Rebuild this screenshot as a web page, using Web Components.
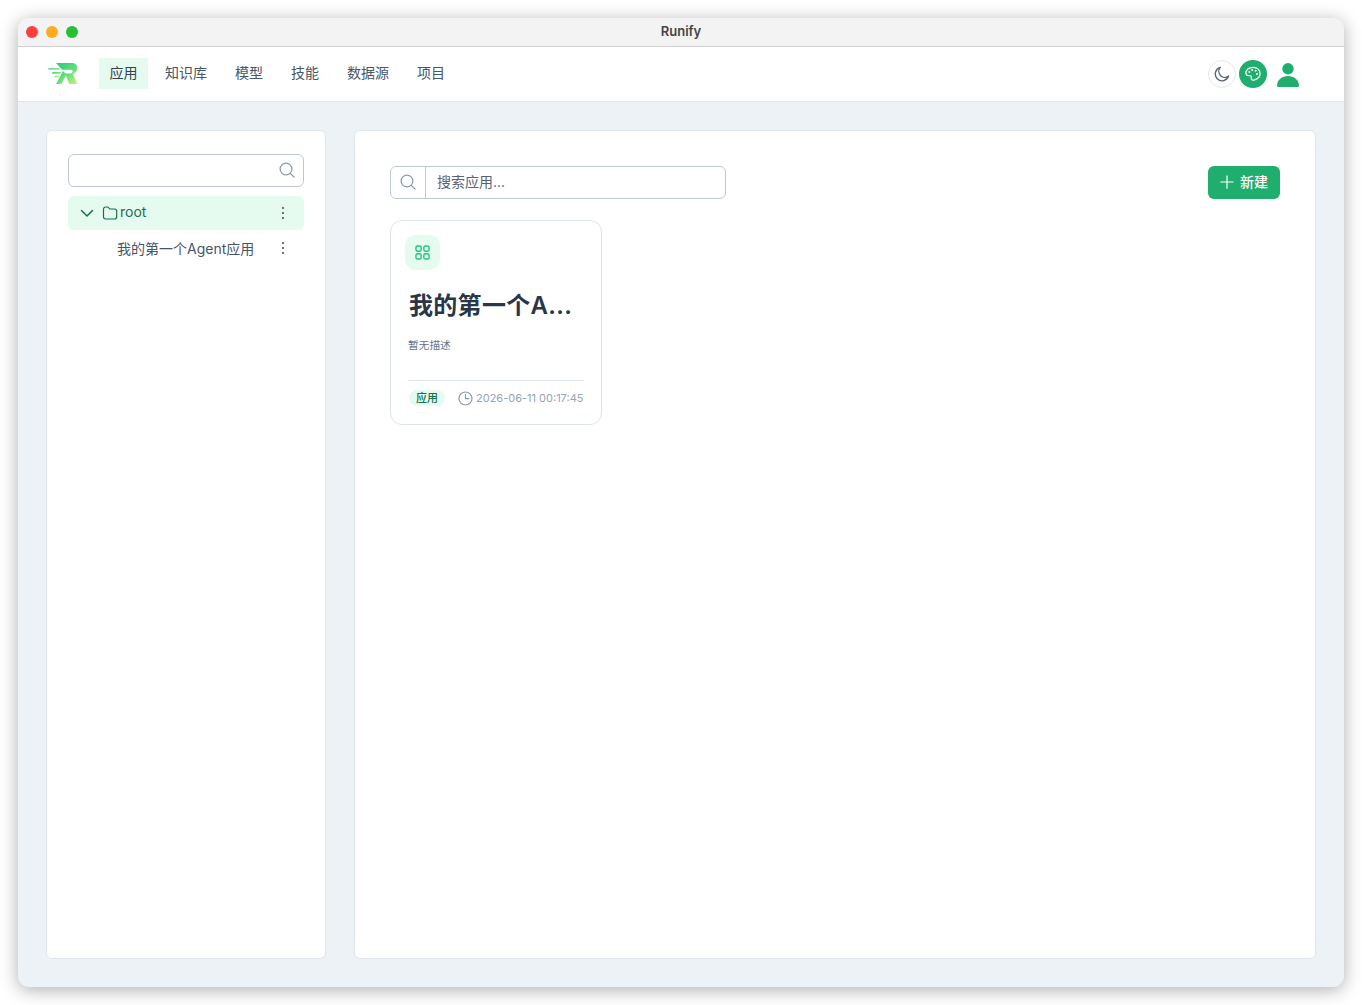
<!DOCTYPE html>
<html lang="zh">
<head>
<meta charset="utf-8">
<title>Runify</title>
<style>
  html, body { margin: 0; height: 100%; background: #fff; }
  body {
    box-sizing: border-box;
    padding: 18px 18px 18px 18px;
    font-family: Inter, "Noto Sans CJK SC", sans-serif;
    color: #334155;
  }
</style>
</head>
<body>
<app-window title="Runify">
  <app-nav></app-nav>
  <tree-panel></tree-panel>
  <app-main>
    <app-card name="我的第一个A..." tag="应用" time="2026-06-11 00:17:45"></app-card>
  </app-main>
</app-window>

<script>
const SEARCH_ICON = `<svg width="16" height="16" viewBox="0 0 16 16" fill="none" stroke="#8a99ad" stroke-width="1.2" stroke-linecap="round"><circle cx="7" cy="7" r="5.9"/><path d="M11.3 11.3 15 15"/></svg>`;
const DOTS_ICON = `<svg width="4" height="14" viewBox="0 0 4 14" fill="#475569"><circle cx="2" cy="2" r="1.1"/><circle cx="2" cy="7" r="1.1"/><circle cx="2" cy="12" r="1.1"/></svg>`;

class AppWindow extends HTMLElement {
  constructor() {
    super();
    this.attachShadow({ mode: 'open' });
  }

  connectedCallback() {
    this.shadowRoot.innerHTML = /* html */ `
    <style>
      :host {
        display: flex;
        flex-direction: column;
        height: 969px;
        border-radius: 11px;
        overflow: hidden;
        background: #edf2f7;
        box-shadow: 0 3px 18px rgba(0, 0, 0, .32);
      }
      .bar {
        position: relative;
        flex: none;
        height: 28px;
        display: flex;
        align-items: center;
        justify-content: center;
        background: #f3f3f3;
        border-bottom: 1px solid #d1d1d1;
        font: 600 13px Inter, sans-serif;
        color: #454545;
      }
      .bar span { margin-top: -2px; }
      .lights {
        position: absolute;
        left: 8px;
        top: 8px;
        display: flex;
        gap: 8px;
      }
      .lights i { width: 12px; height: 12px; border-radius: 50%; }
      .body {
        flex: 1;
        min-height: 0;
        display: flex;
        gap: 28px;
        padding: 28px 28px 28px 28px;
      }
    </style>
    <div class="bar">
      <div class="lights">
        <i style="background:#ff3e3e"></i><i style="background:#fdab20"></i><i style="background:#26c132"></i>
      </div>
      <span>${this.getAttribute('title')}</span>
    </div>
    <slot name="nav"></slot>
    <div class="body"><slot></slot></div>`;
    this.querySelector('app-nav').slot = 'nav';
  }
}

class AppNav extends HTMLElement {
  constructor() {
    super();
    this.attachShadow({ mode: 'open' });
  }

  connectedCallback() {
    const items = ['应用', '知识库', '模型', '技能', '数据源', '项目'];
    this.shadowRoot.innerHTML = /* html */ `
    <style>
      :host {
        display: flex;
        flex: none;
        align-items: center;
        height: 54px;
        padding: 0 45px 0 30px;
        background: #fff;
        border-bottom: 1px solid #dfe5ed;
        box-sizing: content-box;
      }
      .logo { flex: none; width: 30px; height: 24px; margin-right: 21px; }
      ul { display: flex; gap: 7px; margin: 0; padding: 0; list-style: none; margin-top: -1px; }
      li {
        height: 31px;
        line-height: 30px;
        padding: 0 10.5px;
        font-size: 14px;
        color: #475569;
      }
      li:not(.on) { transform: translateX(-.4px); }
      li.on { background: #e5fbef; color: #334155; }
      .tools { display: flex; align-items: center; margin-left: auto; }
      .round {
        box-sizing: border-box;
        width: 28px;
        height: 28px;
        border-radius: 50%;
        display: flex;
        align-items: center;
        justify-content: center;
      }
      .moon { border: 1px solid #e2e8f0; }
      .palette { background: #1fae6e; margin-left: 3px; }
      .user { margin: 2px 0 0 10px; display: block; }
    </style>
    <svg class="logo" viewBox="0 0 30 24">
      <defs>
        <linearGradient id="g" x1="0" y1="0" x2="1" y2="1">
          <stop offset="0" stop-color="#27c97c"/>
          <stop offset=".55" stop-color="#5fdf7a"/>
          <stop offset="1" stop-color="#d2f27c"/>
        </linearGradient>
      </defs>
      <path fill="url(#g)" d="M8 1h16c3.600 0 5.600 2.200 5.300 5.300-.3 2.800-1.800 4.700-4.300 5.700L29.500 22H21.500l-4.700-10.500h5.500c1.400 0 2.300-.8 2.400-1.900.1-1.200-.7-1.900-2-1.900H14.500C13 7.700 11.500 4 8 1z"/>
      <path fill="url(#g)" d="M15 9l3.500 3.500L13.500 22H8z"/>
      <path fill="url(#g)" d="M1 6.300h10.500l.7 1.200H0zM4.500 10h8.800l-.9 1.700H3.500zM7 13.700h4.500l-1 1.500H6z"/>
    </svg>
    <ul>${items.map((t, i) => `<li class="${i === 0 ? 'on' : ''}">${t}</li>`).join('')}</ul>
    <div class="tools">
      <div class="round moon">
        <svg width="16" height="16" viewBox="0 0 16 16" fill="none" stroke="#56617a" stroke-width="1.3" stroke-linejoin="round"><path d="M6.300 1.400A6.800 6.800 0 1 0 14.600 10 6 6 0 0 1 6.300 1.400z"/></svg>
      </div>
      <div class="round palette">
        <svg width="16" height="16" viewBox="0 0 16 16" fill="none" stroke="#fff" stroke-width="1.200" stroke-linejoin="round"><path d="M8 1.300C3.800 1.300.9 4 .9 7.100c0 1.700 1.100 2.600 2.500 2.500 1.300-.1 2.300-.3 2.800.5.500.9-.4 1.700.2 2.900.6 1.100 1.900 1.400 3.200.9 3.200-1.200 5.500-3.600 5.500-6.500 0-3.300-2.900-6.100-6.600-6.100z"/><g fill="#fff" stroke="none"><circle cx="4.300" cy="6" r="1"/><circle cx="7.200" cy="4" r="1"/><circle cx="10.600" cy="4.800" r="1"/><circle cx="12" cy="8" r="1"/></g></svg>
      </div>
      <svg class="user" width="22" height="24" viewBox="0 0 22 24" fill="#1fae6e"><circle cx="11" cy="5.800" r="5.700"/><path d="M0 22.800C0 16.800 5 13 11 13s11 3.800 11 9.800c0 .7-.5 1.200-1.200 1.200H1.200C.5 24 0 23.500 0 22.800z"/></svg>
    </div>`;
  }
}

class SearchBox extends HTMLElement {
  constructor() {
    super();
    this.attachShadow({ mode: 'open' });
  }

  connectedCallback() {
    const leading = this.hasAttribute('leading');
    const placeholder = this.getAttribute('placeholder') || '';
    this.shadowRoot.innerHTML = /* html */ `
    <style>
      :host {
        display: flex;
        box-sizing: border-box;
        height: 33px;
        align-items: center;
        border: 1px solid #bcc8d9;
        border-radius: 6px;
        background: #fff;
      }
      .icon {
        flex: none;
        width: 34px;
        height: 100%;
        display: flex;
        align-items: center;
        justify-content: center;
      }
      .icon svg { margin-top: -1px; }
      .icon.lead { border-right: 1px solid #bcc8d9; }
      .icon.trail { margin-left: auto; width: 33px; }
      span { padding: 0 0 3px 11px; font-size: 14px; color: #56617a; }
    </style>
    ${leading
      ? `<div class="icon lead">${SEARCH_ICON}</div><span>${placeholder}</span>`
      : `<div class="icon trail">${SEARCH_ICON}</div>`}`;
  }
}

class TreeRow extends HTMLElement {
  constructor() {
    super();
    this.attachShadow({ mode: 'open' });
  }

  connectedCallback() {
    const open = this.hasAttribute('open');
    this.shadowRoot.innerHTML = /* html */ `
    <style>
      :host {
        display: flex;
        align-items: center;
        height: 34px;
        padding: 0 19px 0 12px;
        border-radius: 6px;
        font-size: 14px;
        color: #475569;
      }
      :host([open]) { background: #e5fbef; color: #15704a; }
      :host([open]) span { padding-bottom: 4px; }
      .dots { margin-left: auto; display: flex; }
      svg.chev { margin-right: 8px; }
      svg.folder { margin-right: 2px; }
      .leaf { padding-left: 37px; }
    </style>
    ${open
      ? `<svg class="chev" width="14" height="14" viewBox="0 0 14 14" fill="none" stroke="#15704a" stroke-width="1.500" stroke-linecap="round" stroke-linejoin="round"><path d="M1.500 4.500 7 10l5.500-5.500"/></svg>
         <svg class="folder" width="16" height="16" viewBox="0 0 16 16" fill="none" stroke="#15704a" stroke-width="1.200" stroke-linejoin="round"><path d="M1.500 4.200c0-1.400.8-2.200 2-2.200h1.800c.8 0 1.300.4 1.700 1l.7 1h4.800c1.400 0 2.200.8 2.200 2.100v5.700c0 1.400-.8 2.200-2.200 2.200H3.500c-1.200 0-2-.8-2-2.200z"/></svg>`
      : ''}
    <span class="${open ? '' : 'leaf'}"><slot></slot></span>
    <div class="dots">${DOTS_ICON}</div>`;
  }
}

class TreePanel extends HTMLElement {
  constructor() {
    super();
    this.attachShadow({ mode: 'open' });
  }

  connectedCallback() {
    this.shadowRoot.innerHTML = /* html */ `
    <style>
      :host {
        display: flex;
        flex-direction: column;
        flex: none;
        box-sizing: border-box;
        width: 280px;
        padding: 23px 21px;
        background: #fff;
        border: 1px solid #dfe5ed;
        border-radius: 6px;
      }
      search-box { margin-bottom: 9px; }
      tree-row + tree-row { margin-top: 1px; }
    </style>
    <search-box></search-box>
    <tree-row open>root</tree-row>
    <tree-row>我的第一个Agent应用</tree-row>`;
  }
}

class AppMain extends HTMLElement {
  constructor() {
    super();
    this.attachShadow({ mode: 'open' });
  }

  connectedCallback() {
    this.shadowRoot.innerHTML = /* html */ `
    <style>
      :host {
        display: block;
        flex: 1;
        min-width: 0;
        box-sizing: border-box;
        padding: 35px;
        background: #fff;
        border: 1px solid #dfe5ed;
        border-radius: 6px;
      }
      .top { display: flex; justify-content: space-between; margin-bottom: 21px; }
      search-box { width: 336px; }
      button {
        display: flex;
        align-items: center;
        justify-content: center;
        gap: 6px;
        width: 72px;
        height: 33px;
        padding: 0 0 2px;
        border: 0;
        border-radius: 6px;
        background: #1fae6e;
        color: #fff;
        font: 500 14px Inter, "Noto Sans CJK SC", sans-serif;
      }
      button span { margin-top: -1px; }
    </style>
    <div class="top">
      <search-box leading placeholder="搜索应用..."></search-box>
      <button>
        <svg width="14" height="14" viewBox="0 0 14 14" stroke="#fff" stroke-width="1.200" stroke-linecap="round"><path d="M7 .8v12.400M.8 7h12.400"/></svg>
        <span>新建</span>
      </button>
    </div>
    <slot></slot>`;
  }
}

class AppCard extends HTMLElement {
  constructor() {
    super();
    this.attachShadow({ mode: 'open' });
  }

  connectedCallback() {
    this.shadowRoot.innerHTML = /* html */ `
    <style>
      :host {
        display: block;
        box-sizing: border-box;
        width: 212px;
        height: 205px;
        padding: 14px 17px 0;
        border: 1px solid #dde3ee;
        border-radius: 12px;
        background: #fff;
      }
      .badge {
        width: 35px;
        height: 35px;
        margin-left: -3px;
        border-radius: 10px;
        background: #e5fbef;
        display: flex;
        align-items: center;
        justify-content: center;
      }
      .badge svg { margin: -1px 0 0 -1px; }
      h2 {
        margin: 20px 0 0 1px;
        font-size: 24px;
        line-height: 32px;
        font-weight: 600;
        letter-spacing: .3px;
        color: #293548;
        white-space: nowrap;
      }
      p { margin: 17px 0 0; font-size: 10.7px; line-height: 14px; color: #64748b; }
      .foot {
        display: flex;
        align-items: center;
        margin-top: 27px;
        padding-top: 9px;
        border-top: 1px solid #dde3ee;
      }
      .tag {
        box-sizing: border-box;
        width: 36px;
        height: 16px;
        margin-left: 1px;
        line-height: 16px;
        text-align: center;
        border-radius: 8px;
        background: #e5fbef;
        color: #15704a;
        font-size: 11px;
        font-weight: 500;
      }
      .time {
        display: flex;
        align-items: center;
        gap: 3px;
        margin-left: 13px;
        font-size: 11px;
        color: #94a3b8;
        white-space: nowrap;
      }
    </style>
    <div class="badge">
      <svg width="15" height="15" viewBox="0 0 16 16" fill="none" stroke="#22c47e" stroke-width="1.500"><rect x="1" y="1" width="5.600" height="5.600" rx="1.800"/><rect x="9.400" y="1" width="5.600" height="5.600" rx="1.800"/><rect x="1" y="9.400" width="5.600" height="5.600" rx="1.800"/><rect x="9.400" y="9.400" width="5.600" height="5.600" rx="1.800"/></svg>
    </div>
    <h2>${this.getAttribute('name')}</h2>
    <p>暂无描述</p>
    <div class="foot">
      <span class="tag">${this.getAttribute('tag')}</span>
      <span class="time">
        <svg width="15" height="15" viewBox="0 0 15 15" fill="none" stroke="#8a99ad" stroke-width="1.200" stroke-linecap="round" stroke-linejoin="round"><circle cx="7.500" cy="7.500" r="6.500"/><path d="M7.500 3.500v4.200h3.300"/></svg>
        ${this.getAttribute('time')}
      </span>
    </div>`;
  }
}

customElements.define('search-box', SearchBox);
customElements.define('tree-row', TreeRow);
customElements.define('tree-panel', TreePanel);
customElements.define('app-nav', AppNav);
customElements.define('app-card', AppCard);
customElements.define('app-main', AppMain);
customElements.define('app-window', AppWindow);
</script>
</body>
</html>
